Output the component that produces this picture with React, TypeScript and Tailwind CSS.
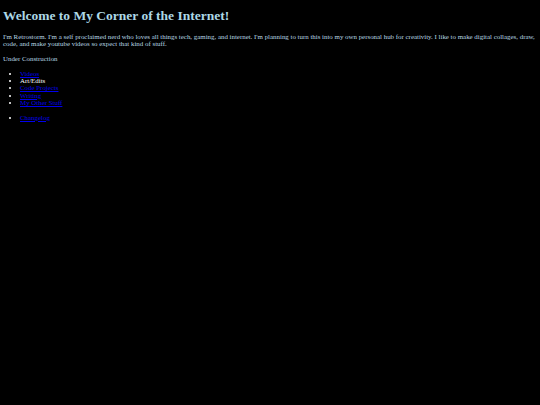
export default function App() {
  const links = ["Videos", "Art/Edits", "Code Projects", "Writing", "My Other Stuff"];

  return (
    <div className="min-h-[405px] bg-black px-[3px] py-px font-['Liberation_Serif',serif] text-white">
      <h1 className="mt-[7px] mb-[9px] text-[13.5px] font-bold leading-[1.15] text-[#add8e6]">
        Welcome to My Corner of the Internet!
      </h1>
      <p className="text-[6.9px] leading-[7.4px] text-[#b8d8e4]">
        I'm Retrostorm. I'm a self proclaimed nerd who loves all things tech, gaming, and internet. I'm planning to turn
        this into my own personal hub for creativity. I like to make digital collages, draw, code, and make youtube
        videos so expect that kind of stuff.
      </p>
      <p className="my-[7.4px] text-[6.9px] leading-[7.4px] text-[#b8d8e4]">Under Construction</p>
      <ul className="list-disc pl-[17px] text-[6.9px] leading-[7.4px]">
        {links.map((l) =>
          l === "Art/Edits" ? (
            <li key={l}>{l}</li>
          ) : (
            <li key={l}>
              <a href="#" className="text-[#0000ee] underline">
                {l}
              </a>
            </li>
          )
        )}
      </ul>
      <ul className="mt-[7.4px] list-disc pl-[17px] text-[6.9px] leading-[7.4px]">
        <li>
          <a href="#" className="text-[#0000ee] underline">
            Changelog
          </a>
        </li>
      </ul>
    </div>
  );
}
